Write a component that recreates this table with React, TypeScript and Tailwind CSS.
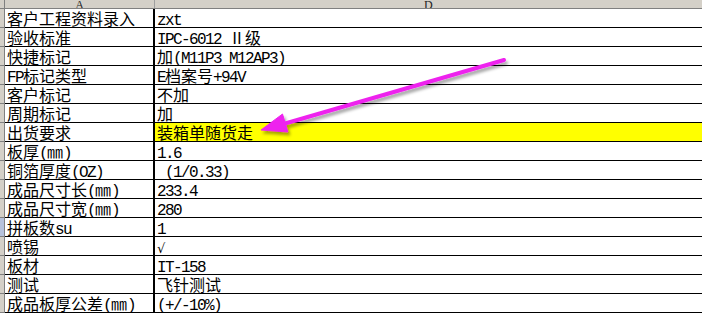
import React from 'react'

type Row = { label: string; value: string; yellow?: boolean; selected?: boolean }

const rows: Row[] = [
  { label: '客户工程资料录入', value: 'zxt' },
  { label: '验收标准', value: 'IPC-6012 Ⅱ级' },
  { label: '快捷标记', value: '加(M11P3 M12AP3)' },
  { label: 'FP标记类型', value: 'E档案号+94V' },
  { label: '客户标记', value: '不加' },
  { label: '周期标记', value: '加' },
  { label: '出货要求', value: '装箱单随货走', yellow: true },
  { label: '板厚(㎜)', value: '1.6' },
  { label: '铜箔厚度(OZ)', value: ' (1/0.33)' },
  { label: '成品尺寸长(㎜)', value: '233.4' },
  { label: '成品尺寸宽(㎜)', value: '280' },
  { label: '拼板数su', value: '1', selected: true },
  { label: '喷锡', value: '√' },
  { label: '板材', value: 'IT-158' },
  { label: '测试', value: '飞针测试' },
  { label: '成品板厚公差(㎜)', value: '(+/-10%)' },
]

// ascii runs get the narrow mono face, the rest the CJK face
function CellText({ text }: { text: string }) {
  const parts = text.match(/[\x20-\x7e]+|[^\x20-\x7e]+/g) ?? []
  return (
    <div className="h-[18px] whitespace-pre overflow-hidden font-['Noto_Sans_CJK_SC',sans-serif] text-[16px] leading-[19px]">
      {parts.map((p, i) =>
        /^[\x20-\x7e]+$/.test(p)
          ? <span key={i} className="font-['Liberation_Mono',monospace] text-[16px] leading-[0px] tracking-[-1.6px]">{p}</span>
          : p === '√'
            ? <span key={i} className="font-['DejaVu_Sans',sans-serif] text-[13px] leading-[0px]">{p}</span>
            : <span key={i} className="leading-[0px]">{p}</span>
      )}
    </div>
  )
}

function Arrow() {
  return (
    <svg className="absolute left-0 top-0 pointer-events-none" width="702" height="315">
      <defs>
        <filter id="sh" x="-20%" y="-20%" width="140%" height="140%">
          <feDropShadow dx="2" dy="3" stdDeviation="1.5" floodColor="#000" floodOpacity="0.35" />
        </filter>
      </defs>
      <g filter="url(#sh)" fill="#ee22ee" stroke="#ee22ee">
        <line x1="504" y1="60" x2="280" y2="125" strokeWidth="4" strokeLinecap="round" />
        <polygon points="261,130 282.5,114 288,132" strokeWidth="1" strokeLinejoin="round" />
      </g>
    </svg>
  )
}

export default function App() {
  return (
    <div className="relative w-[702px] h-[315px] overflow-hidden bg-white text-black">
      {/* column headers */}
      <div className="flex h-[9px] bg-[#d4d0c8] border-b border-[#808080]">
        <div className="w-[5px] border-r border-[#808080]" />
        <div className="w-[150px] border-r border-[#a0a0a0] flex justify-center items-end overflow-hidden">
          <span className="font-['Liberation_Serif',serif] text-[12px] leading-[12px] -mb-[3px] text-[#222]">A</span>
        </div>
        <div className="flex-1 flex items-end overflow-hidden">
          <span className="ml-[269px] font-['Liberation_Serif',serif] text-[12px] leading-[12px] -mb-[3px] text-[#222]">D</span>
        </div>
      </div>

      {/* rows */}
      {rows.map((r, i) => (
        <div key={i} className="flex h-[19px]">
          <div className={`w-[5px] border-r border-b border-[#808080] ${r.selected ? 'bg-[#b6c2dc]' : 'bg-[#d4d0c8]'}`} />
          <div className="w-[148px] border-b border-black pl-[2px] overflow-hidden">
            <CellText text={r.label} />
          </div>
          <div className="w-[2px] bg-black" />
          <div className={`flex-1 border-b border-black pl-[2px] overflow-hidden ${r.yellow ? 'bg-[#ffff00]' : ''}`}>
            <CellText text={r.value} />
          </div>
        </div>
      ))}

      <Arrow />
    </div>
  )
}
